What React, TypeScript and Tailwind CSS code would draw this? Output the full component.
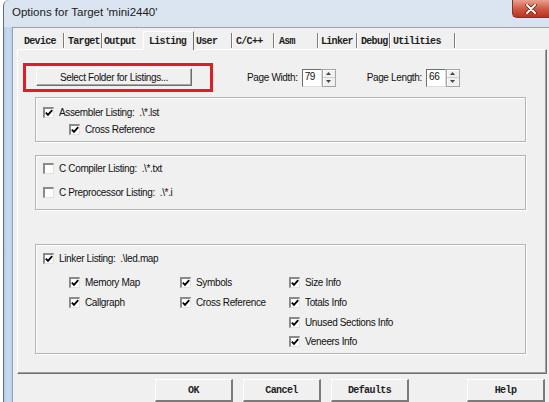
import clsx from "clsx";

const sans = "font-['Liberation_Sans',Arial,sans-serif]";
const mono = "font-['Liberation_Mono','Courier_New',monospace]";

const tabs = [
  { label: "Device", w: "w-[47px]", pl: "pl-[7px]" },
  { label: "Target", w: "w-[38px]", pl: "pl-[4px]" },
  { label: "Output", w: "w-[41px]", pl: "pl-[2px]", noSep: true },
  { label: "Listing", w: "w-[51px]", pl: "pl-[5px]", active: true },
  { label: "User", w: "w-[38px]", pl: "pl-[2px]" },
  { label: "C/C++", w: "w-[42px]", pl: "pl-[4px]" },
  { label: "Asm", w: "w-[44px]", pl: "pl-[5px]" },
  { label: "Linker", w: "w-[39px]", pl: "pl-[3px]" },
  { label: "Debug", w: "w-[33px]", pl: "pl-[4px]" },
  { label: "Utilities", w: "w-[65px]", pl: "pl-[3px]" },
];

const Check = ({ on }: { on?: boolean }) => (
  <span className="w-[11px] h-[11px] shrink-0 bg-white border-t-2 border-l-2 border-t-[#8a8a8a] border-l-[#8a8a8a] border-b border-r border-b-[#e2e2e2] border-r-[#e2e2e2] flex items-center justify-center">
    {on && (
      <svg width="8" height="8" viewBox="0 0 8 8">
        <path d="M0.8 3.6 L3 5.9 L7.2 1.2" fill="none" stroke="#000" strokeWidth="1.8" />
      </svg>
    )}
  </span>
);

const Item = ({
  on,
  label,
  className,
}: {
  on?: boolean;
  label: string;
  className?: string;
}) => (
  <div className={clsx("flex items-center gap-[5px]", className)}>
    <Check on={on} />
    <span className="whitespace-pre">{label}</span>
  </div>
);

const Spin = () => (
  <div className="w-[14px] h-[18px] flex flex-col border border-[#a5a5a5] bg-[#f0f0f0] shadow-[inset_1px_1px_0_#ffffff]">
    <div className="flex-1 flex items-center justify-center border-b border-[#cfcfcf]">
      <svg width="5" height="3" viewBox="0 0 5 3">
        <path d="M2.5 0 L5 3 L0 3Z" fill="#444" />
      </svg>
    </div>
    <div className="flex-1 flex items-center justify-center">
      <svg width="5" height="3" viewBox="0 0 5 3">
        <path d="M0 0 L5 0 L2.5 3Z" fill="#444" />
      </svg>
    </div>
  </div>
);

const NumBox = ({ value }: { value: string }) => (
  <div className="flex items-center">
    <div className="w-[20px] h-[18px] bg-white border border-t-[#6e6e6e] border-l-[#6e6e6e] border-r-[#dcdcdc] border-b-[#dcdcdc] pl-[2px] leading-[14px]">
      {value}
    </div>
    <Spin />
  </div>
);

const Group = ({ className, children }: { className?: string; children: React.ReactNode }) => (
  <div
    className={clsx(
      "ml-[17px] w-[491px] border border-[#b4b4b4] shadow-[1px_1px_0_#ffffff,inset_1px_1px_0_#ffffff]",
      className,
    )}
  >
    {children}
  </div>
);

const DlgButton = ({ label, className }: { label: string; className?: string }) => (
  <button
    className={clsx(
      "w-[78px] h-[23px] bg-[#f0f0f0] border-t border-l border-t-white border-l-white border-r-2 border-b-2 border-r-[#7a7a7a] border-b-[#7a7a7a] text-[10px] font-bold tracking-[-0.6px] text-[#222]",
      mono,
      className,
    )}
  >
    {label}
  </button>
);

export default function App() {
  return (
    <div className={clsx("w-[549px] h-[402px] bg-white flex overflow-hidden text-[10px] tracking-[-0.35px] text-[#111]", sans)}>
      <div className="ml-[3px] flex-1 flex flex-col border-l border-[#5d6f86] rounded-tl-[6px] bg-gradient-to-b from-[#dbe5f1] to-[#c9d9eb]">
        {/* title bar */}
        <div className="h-[27px] relative flex items-center pl-[8px] pb-[1px]">
          <span className="text-[11.5px] tracking-normal text-[#1b1b1b]">Options for Target 'mini2440'</span>
          <div className="absolute right-0 top-0 w-[37px] h-[18px] rounded-bl-[5px] border border-t-0 border-r-0 border-[#8a2d22] bg-gradient-to-b from-[#e8a08e] via-[#d05a45] to-[#b8321f] flex items-center justify-center">
            <svg width="12" height="10" viewBox="0 0 12 10">
              <path d="M2 1 L10 9 M10 1 L2 9" stroke="#5a1a12" strokeWidth="3.4" strokeLinecap="round" />
              <path d="M2 1 L10 9 M10 1 L2 9" stroke="#ffffff" strokeWidth="2" strokeLinecap="round" />
            </svg>
          </div>
        </div>

        <div className="flex-1 flex">
          {/* left frame strip */}
          <div className="w-[8px] bg-gradient-to-r from-[#b6cbe3] via-[#c9dbef] to-[#bcd0e7]" />

          {/* client area */}
          <div className="flex-1 bg-[#f0f0f0] border-l border-t border-[#8ea2b9] pl-[4px] pt-[3px] flex flex-col">
            {/* tabs */}
            <div className={clsx("h-[18px] flex items-end text-[10px] font-bold tracking-[-0.7px] text-[#1e1e1e]", mono)}>
              {tabs.map((t) =>
                t.active ? (
                  <div
                    key={t.label}
                    className={clsx(
                      "h-[19px] -mb-[1px] relative z-10 bg-[#f0f0f0] border-l border-t border-white border-r border-r-[#6f6f6f] flex items-start pt-[2px]",
                      t.w,
                      t.pl,
                    )}
                  >
                    {t.label}
                  </div>
                ) : (
                  <div key={t.label} className={clsx("h-[16px] flex items-start pb-[1px]", t.w)}>
                    <div
                      className={clsx(
                        "flex-1 h-[15px] flex items-center pt-[2px]",
                        t.pl,
                        !t.noSep && "border-r border-[#7d7d7d] shadow-[1px_0_0_#ffffff]",
                      )}
                    >
                      {t.label}
                    </div>
                  </div>
                ),
              )}
            </div>

            {/* tab panel */}
            <div className="w-[530px] h-[325px] border-t border-l border-white border-r border-b border-r-[#6f6f6f] border-b-[#6f6f6f] shadow-[inset_-1px_-1px_0_#a0a0a0] flex flex-col">
              <div className="flex items-center mt-[13px]">
                <div className="ml-[5px] w-[190px] h-[29px] border-[3px] border-[#e31b22] pl-[10px] pt-[2px]">
                  <button className="w-[156px] h-[18px] bg-[#f0f0f0] border border-t-white border-l-white border-r-[#6f6f6f] border-b-[#6f6f6f] shadow-[inset_-1px_-1px_0_#a8a8a8]">
                    Select Folder for Listings...
                  </button>
                </div>
                <span className="ml-[34px]">Page Width:</span>
                <div className="ml-[4px]">
                  <NumBox value="79" />
                </div>
                <span className="ml-[31px]">Page Length:</span>
                <div className="ml-[4px]">
                  <NumBox value="66" />
                </div>
              </div>

              <Group className="mt-[5px] h-[45px] pt-[6px]">
                <Item on label="Assembler Listing:  .\*.lst" className="h-[17px] pl-[7px]" />
                <Item on label="Cross Reference" className="h-[17px] pl-[33px]" />
              </Group>

              <Group className="mt-[13px] h-[55px] pt-[4px]">
                <Item label="C Compiler Listing:  .\*.txt" className="h-[17px] pl-[7px]" />
                <Item label="C Preprocessor Listing:  .\*.i" className="h-[17px] pl-[7px] mt-[7px]" />
              </Group>

              <Group className="mt-[34px] h-[110px] pt-[5px]">
                <Item on label="Linker Listing:  .\led.map" className="h-[17px] pl-[7px]" />
                <div className="grid grid-cols-[111px_109px_1fr] pl-[33px] mt-[5px]">
                  <Item on label="Memory Map" className="h-[20px]" />
                  <Item on label="Symbols" className="h-[20px]" />
                  <Item on label="Size Info" className="h-[20px]" />
                  <Item on label="Callgraph" className="h-[20px]" />
                  <Item on label="Cross Reference" className="h-[20px]" />
                  <Item on label="Totals Info" className="h-[20px]" />
                  <div />
                  <div />
                  <Item on label="Unused Sections Info" className="h-[20px]" />
                  <div />
                  <div />
                  <Item on label="Veneers Info" className="h-[18px]" />
                </div>
              </Group>
            </div>

            {/* dialog buttons */}
            <div className="flex mt-[5px]">
              <DlgButton label="OK" className="ml-[138px]" />
              <DlgButton label="Cancel" className="ml-[10px]" />
              <DlgButton label="Defaults" className="ml-[10px]" />
              <DlgButton label="Help" className="ml-[58px]" />
            </div>
          </div>
        </div>
      </div>
    </div>
  );
}
